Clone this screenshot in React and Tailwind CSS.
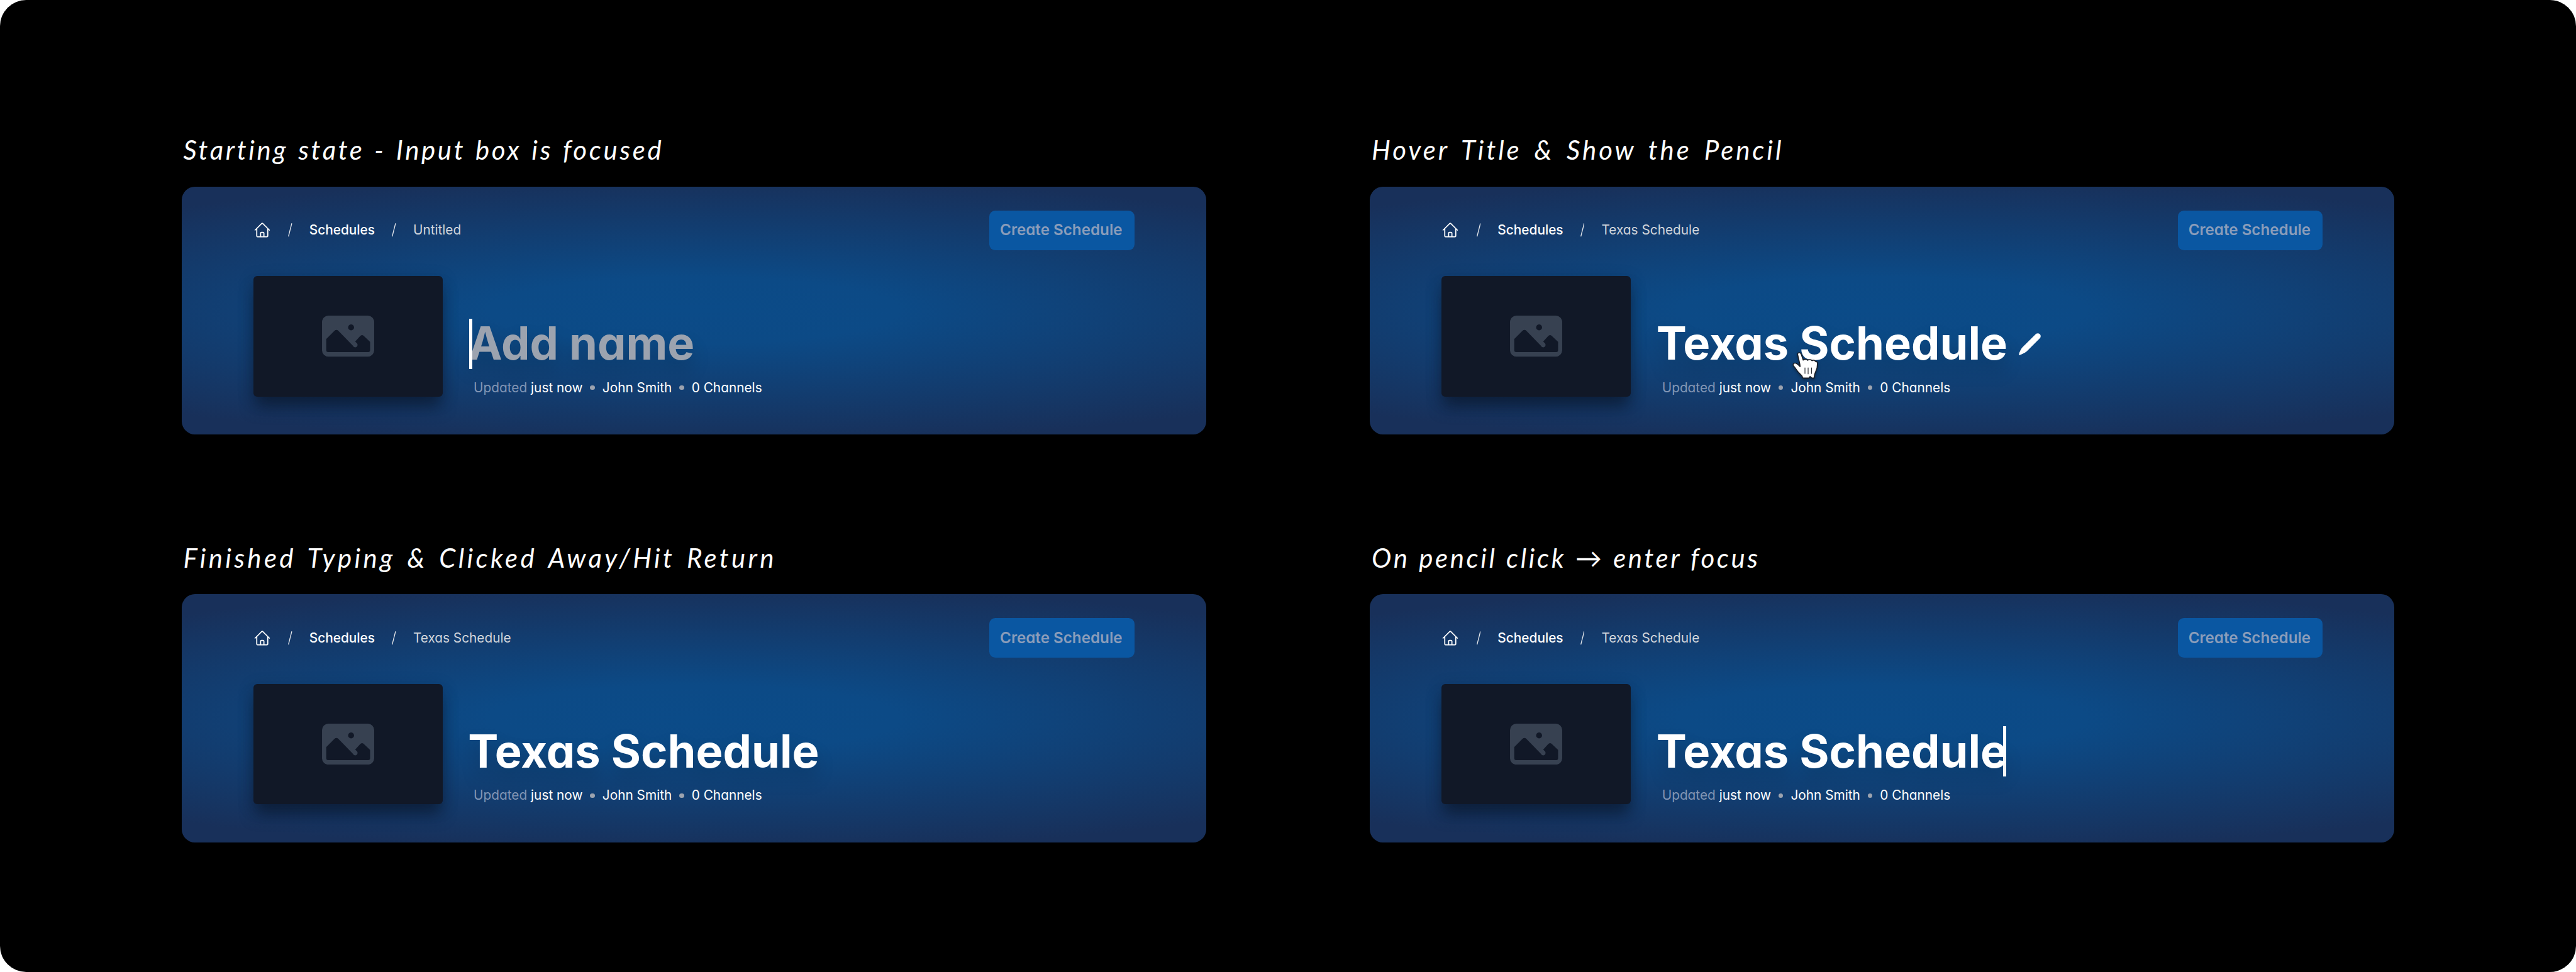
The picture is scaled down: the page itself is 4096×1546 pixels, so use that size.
import React from "react";

const inter = "font-['Inter',sans-serif] [font-feature-settings:'cv11']";

function HomeIcon() {
  return (
    <svg viewBox="0 0 24 24" fill="none" stroke="currentColor" strokeWidth="1.5" strokeLinecap="round" strokeLinejoin="round" className="size-[28px] shrink-0 text-white">
      <path d="M2.25 12l8.954-8.955a1.126 1.126 0 011.591 0L21.75 12M4.5 9.75v10.125c0 .621.504 1.125 1.125 1.125H9.75v-4.875c0-.621.504-1.125 1.125-1.125h2.25c.621 0 1.125.504 1.125 1.125V21h4.125c.621 0 1.125-.504 1.125-1.125V9.75M8.25 21h8.25" />
    </svg>
  );
}

function Slash() {
  return (
    <svg viewBox="0 0 7 22.6" fill="none" stroke="#e5e7eb" strokeWidth="1.4" className="h-[21.4px] w-[6.6px] shrink-0">
      <path d="M6.3 0.2L0.7 22.4" />
    </svg>
  );
}

function PhotoIcon() {
  return (
    <svg viewBox="1.5 3.75 21 16.5" className="h-[65.2px] w-[83px]">
      <rect x="1.5" y="3.75" width="21" height="16.5" rx="2.6" fill="#374151" />
      <path
        fill="#111827"
        d="M3.2 13.2L6.55 9.85Q7.3 9.2 8.05 9.85L13.95 15.9A.97.97 0 1 0 15.35 14.7L14.85 14.2L16.8 12.05Q17.5 11.2 18.3 11.9L20.85 14.3V17.65Q20.85 18.4 20.1 18.4H3.95Q3.2 18.4 3.2 17.65Z"
      />
      <circle cx="13.2" cy="8.5" r="1.2" fill="#111827" />
    </svg>
  );
}

function PencilIcon() {
  return (
    <svg viewBox="0 0 37 37" fill="#fff" className="size-[34.9px]">
      <path d="M28.5 1.6a5 5 0 0 1 7 0a5 5 0 0 1 0 7L13.5 30.6C10.5 33.3 6 35.3 1.4 36.8Q-.1 37 .2 35.5C1.6 31 3.2 26.8 6.3 23.6Z" />
    </svg>
  );
}

function HandCursor() {
  return (
    <svg viewBox="120 216 145 155" className="absolute left-[212.3px] top-[51.5px] h-[48.7px] w-[45.6px] drop-shadow-[0_2px_2px_rgba(0,0,0,0.35)]">
      <path
        fill="#fff"
        stroke="#1c1f26"
        strokeWidth="5"
        strokeLinejoin="round"
        d="M153 235C152 228 158 224 164 226C169 227 171 231 172 236L181 263C185 258 199 258 204 264C208 259 221 259 226 266C231 262 240 263 243 270C250 268 254 274 253 284C253 300 250 309 246 317C241 327 238 333 236 354L224 353L216 346L210 354H180C176 344 172 338 164 332C152 322 145 306 133 293C127 286 132 277 141 278C150 279 156 286 165 296C166 283 158 262 153 235Z"
      />
      <path fill="none" stroke="#1c1f26" strokeWidth="3.4" strokeLinecap="round" d="M190 302V331M206 302V333M223 302V331" />
    </svg>
  );
}

function Dot() {
  return <span className="size-[7.4px] shrink-0 rounded-full bg-[#9ca3af]" />;
}

function Caret() {
  return <span className="h-[80.1px] w-[5.3px] shrink-0 bg-white" />;
}

function Title({ mode }) {
  const text = "mb-px drop-shadow-[0_18px_14px_rgba(0,0,0,0.16)]";
  if (mode === "empty") {
    return (
      <div className="relative flex h-[80.1px] items-center">
        <span className="absolute left-0 top-0 z-10 flex"><Caret /></span>
        <h1 className={`-ml-[1px] text-[#9ca3af] ${text}`}>Add name</h1>
      </div>
    );
  }
  return (
    <div className="relative flex h-[80.1px] items-center">
      <h1 className={`-ml-[1.5px] text-white ${text}`}>Texas Schedule</h1>
      {mode === "focus" && <span className="-ml-[7.5px] flex"><Caret /></span>}
      {mode === "hover" && (
        <>
          <span className="ml-[18px] mt-px flex"><PencilIcon /></span>
          <HandCursor />
        </>
      )}
    </div>
  );
}

function Card({ crumb, mode }) {
  return (
    <section className="h-[394.6px] rounded-[21px] bg-[radial-gradient(ellipse_1300px_212px_at_50%_50%,#0b4b88_0%,#0c4a86_25%,#18305a_100%)] px-[114.3px] pt-[38px]">
      <header className="flex h-[63px] items-center justify-between">
        <nav className="flex items-center gap-[27.2px] text-[20.8px] leading-none">
          <HomeIcon />
          <Slash />
          <span className="mt-px font-medium text-white">Schedules</span>
          <Slash />
          <span className="mt-px text-[#d1d5db]">{crumb}</span>
        </nav>
        <button className="h-full w-[230.4px] whitespace-nowrap rounded-[9.5px] bg-[#0a57a2] pr-[2px] text-[24.2px] font-semibold leading-none text-[#8b9dba]">
          Create Schedule
        </button>
      </header>
      <div className="mt-[41.7px] flex gap-[42.1px]">
        <div className="flex h-[191.4px] w-[300.8px] shrink-0 items-center justify-center rounded-[6px] bg-[#111827] shadow-[0_20px_24px_-4px_rgba(10,18,34,0.55),0_6px_24px_rgba(10,18,34,0.25)]">
          <PhotoIcon />
        </div>
        <div className="pt-[67.2px] text-[72.2px] font-bold leading-[80.1px]">
          <Title mode={mode} />
          <p className="mt-[16px] flex h-[28px] items-center gap-[12px] whitespace-nowrap pl-[7.4px] text-[20.8px] font-normal leading-[28px] text-white">
            <span><span className="text-[#8296b5]">Updated</span> just now</span>
            <Dot />
            <span>John Smith</span>
            <Dot />
            <span>0 Channels</span>
          </p>
        </div>
      </div>
    </section>
  );
}

const frames = [
  { caption: "Starting state - Input box is focused", crumb: "Untitled", mode: "empty", spacing: "tracking-[3.6px] [word-spacing:2.5px]" },
  { caption: "Hover Title & Show the Pencil", crumb: "Texas Schedule", mode: "hover", spacing: "tracking-[3.9px] [word-spacing:6.3px]" },
  { caption: "Finished Typing & Clicked Away/Hit Return", crumb: "Texas Schedule", mode: "idle", spacing: "tracking-[4.3px] [word-spacing:4.8px]" },
  { caption: "On pencil click → enter focus", crumb: "Texas Schedule", mode: "focus", spacing: "tracking-[3.6px] [word-spacing:1.2px]" },
];

export default function App() {
  return (
    <div className="h-[1546px] w-[4096px] overflow-hidden bg-white">
      <main className={`grid h-full grid-cols-[1629.3px_1629.3px] content-start gap-x-[260.3px] gap-y-[157.4px] rounded-[41.5px] bg-black pl-[288.5px] pt-[200px] ${inter}`}>
        {frames.map((f) => (
          <article key={f.caption}>
            <h2 className={`h-[96.7px] whitespace-nowrap pl-[3px] pt-[8px] font-['Lato',sans-serif] text-[42px] italic leading-[60px] text-white ${f.spacing}`}>
              {f.caption}
            </h2>
            <Card crumb={f.crumb} mode={f.mode} />
          </article>
        ))}
      </main>
    </div>
  );
}
